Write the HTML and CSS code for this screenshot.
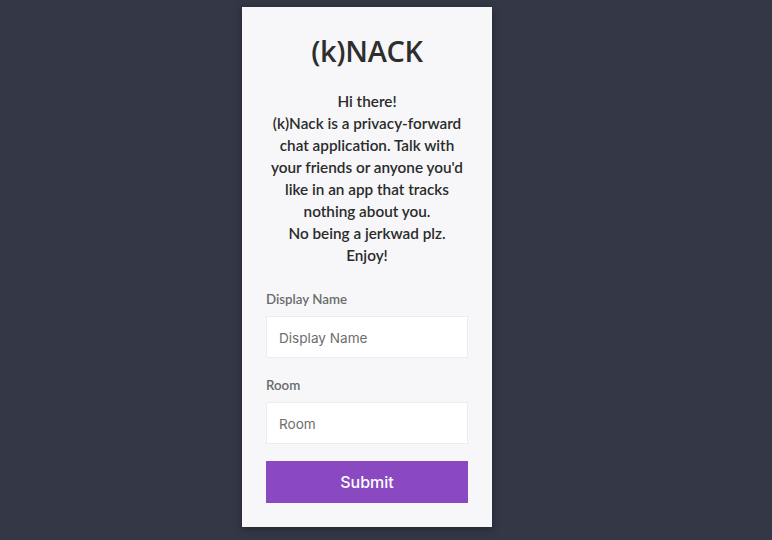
FILE: index.html
```html
<!DOCTYPE html>
<html>
<head>
<meta charset="utf-8">
<link rel="stylesheet" href="styles.css">
</head>
<body>
<div class="card">
  <h1 class="title">(k)NACK</h1>
  <p class="intro">Hi there!<br>(k)Nack is a privacy-forward chat application. Talk with your friends or anyone you'd like in an app that tracks nothing about you.<br>No being a jerkwad plz.<br>Enjoy!</p>
  <form class="form">
    <label class="label" for="dn">Display Name</label>
    <input class="input" id="dn" type="text" placeholder="Display Name">
    <label class="label" for="room">Room</label>
    <input class="input" id="room" type="text" placeholder="Room">
    <button class="submit" type="button">Submit</button>
  </form>
</div>
</body>
</html>
```
FILE: styles.css
```css
html, body {
  margin: 0;
  padding: 0;
  height: 100%;
}
body {
  background: #343746;
  display: flex;
  justify-content: center;
  align-items: flex-start;
  padding-right: 38px;
  box-sizing: border-box;
  font-family: "Lato", "Noto Sans", sans-serif;
}
.card {
  margin-top: 7px;
  width: 250px;
  box-sizing: border-box;
  padding: 24px 24px 24px;
  background: #f7f7f9;
  box-shadow: 0 2px 8px rgba(0,0,0,0.35);
  color: #2b2b2b;
}
.title {
  margin: 0;
  text-align: center;
  font-size: 29px;
  font-weight: 600;
  line-height: 40px;
  font-family: "Open Sans", sans-serif;
  color: #2e2e2e;
  letter-spacing: -0.3px;
}
.intro {
  margin: 19px 0 0;
  text-align: center;
  font-size: 15.3px;
  line-height: 22px;
  font-weight: 600;
  color: #2b2b2b;
}
.form {
  display: flex;
  flex-direction: column;
  margin-top: 24px;
}
.label {
  font-size: 13.3px;
  font-weight: 600;
  color: #6b6b6b;
  line-height: 18px;
  margin-bottom: 8px;
}
.input {
  height: 42px;
  box-sizing: border-box;
  border: 1px solid #ececec;
  background: #fff;
  padding: 2px 12px 0;
  font-family: "Inter", "Liberation Sans", sans-serif;
  font-size: 13.6px;
  color: #333;
  margin-bottom: 18px;
  outline: none;
}
.input::placeholder {
  color: #6e6e6e;
}
.submit {
  height: 42px;
  border: none;
  background: #8b49c1;
  color: #fff;
  font-family: "Inter", "Liberation Sans", sans-serif;
  font-size: 16px;
  font-weight: 500;
  margin-top: -1px;
  cursor: pointer;
}
```
